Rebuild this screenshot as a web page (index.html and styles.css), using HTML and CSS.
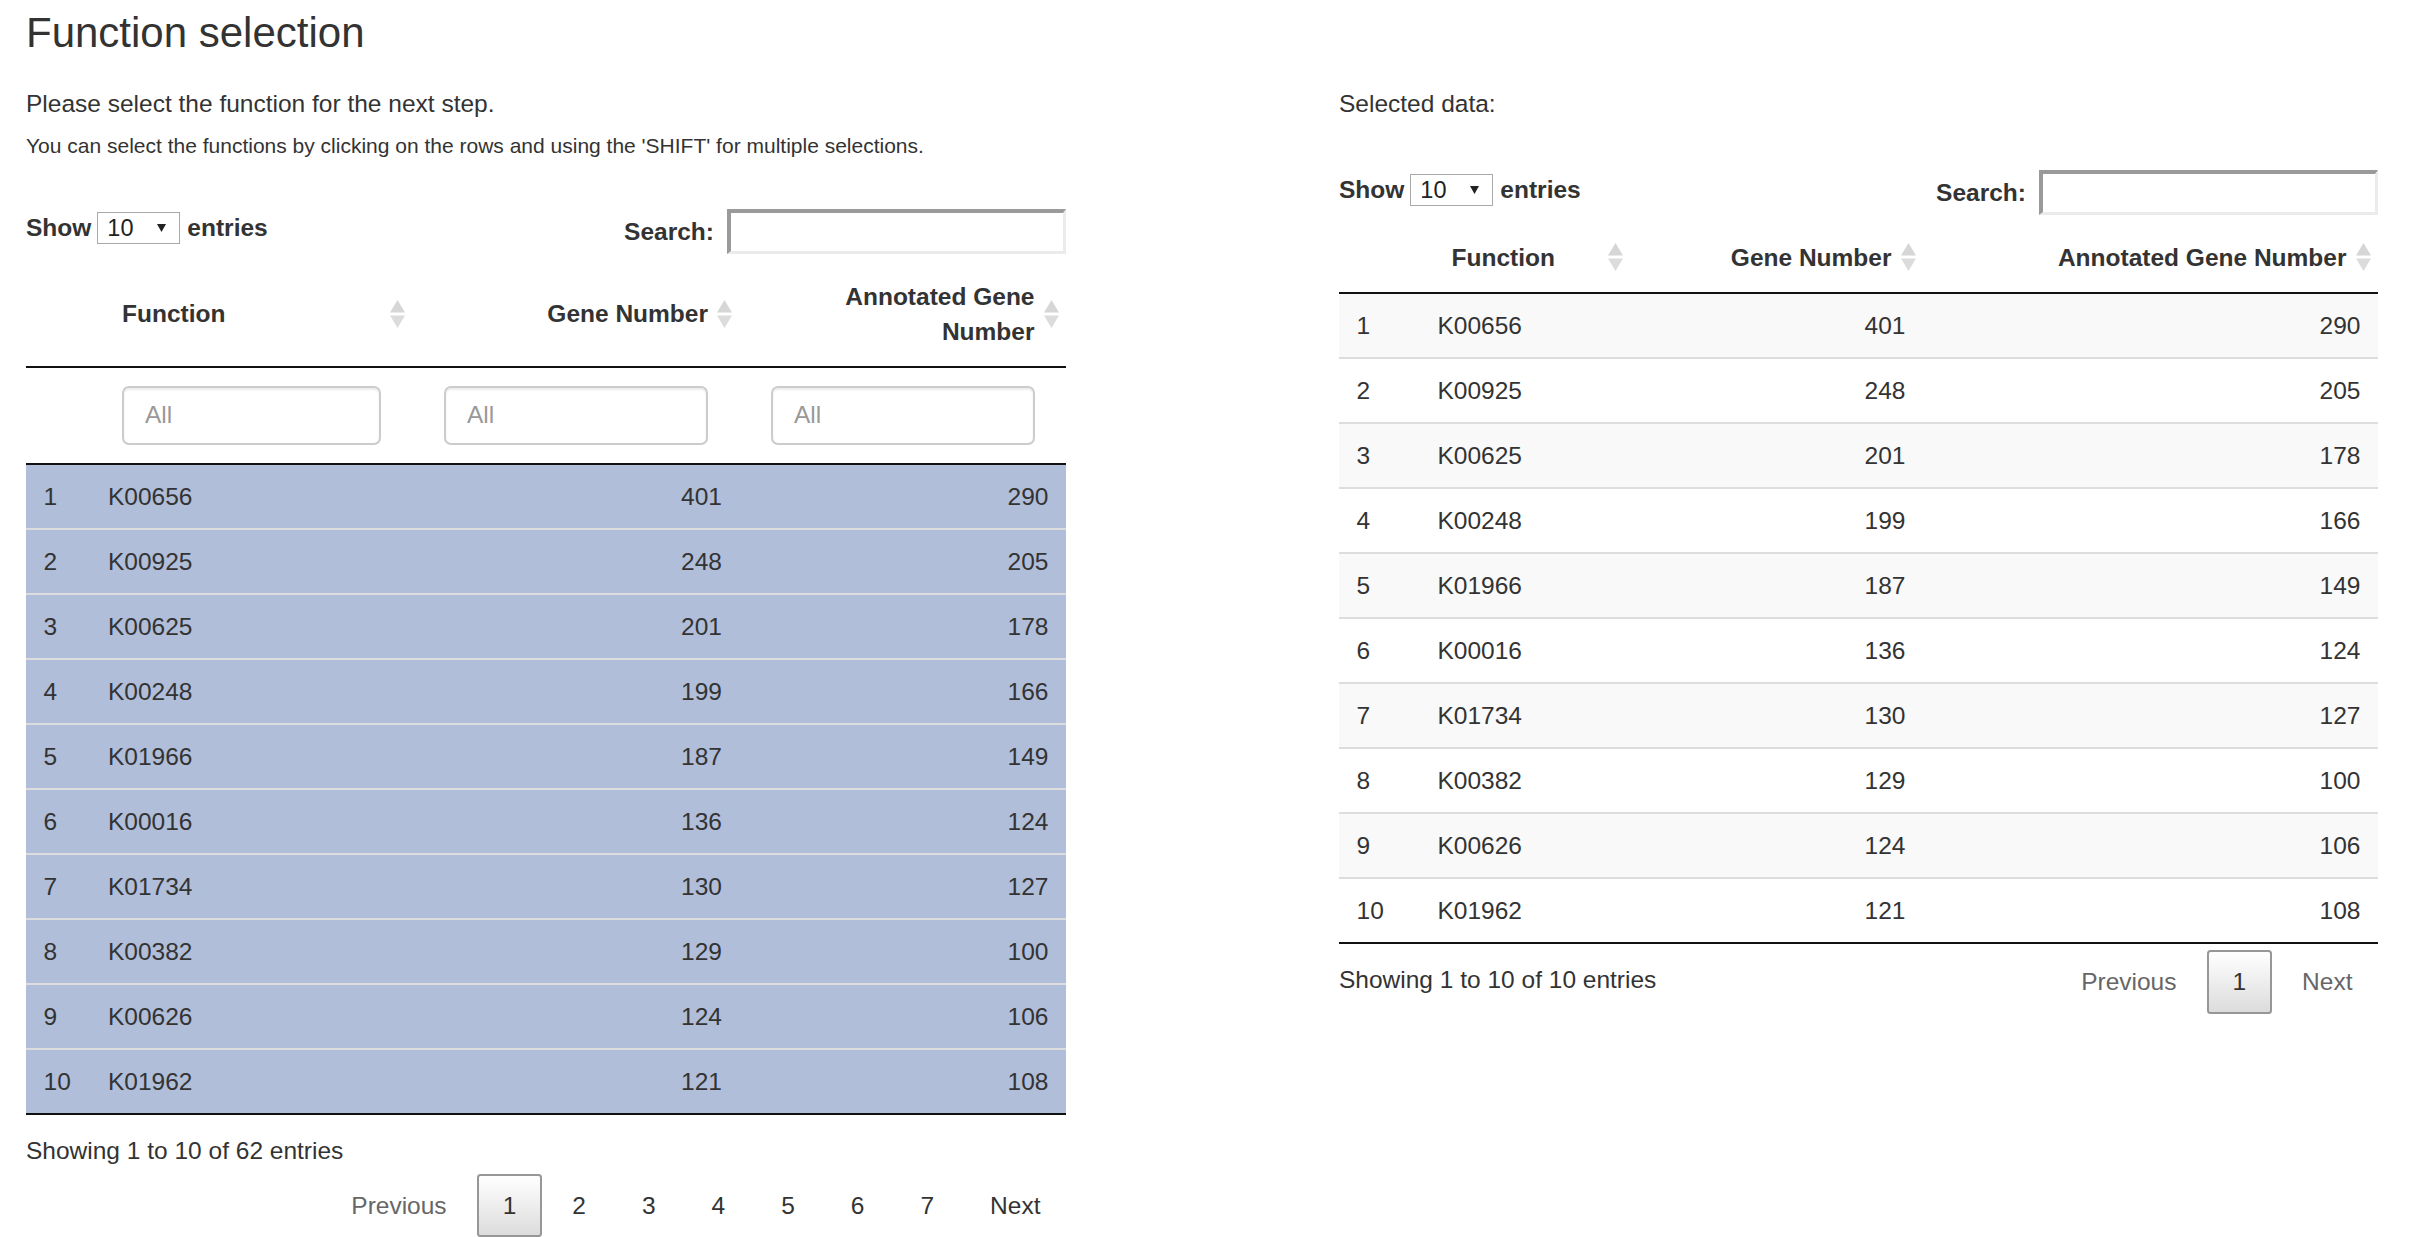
FILE: index.html
```html
<!DOCTYPE html>
<html lang="en">
<head>
<meta charset="utf-8">
<title>Function selection</title>
<link rel="stylesheet" href="styles.css">
</head>
<body>
<div class="page">
  <h3 class="title">Function selection</h3>
  <div class="cols">
    <div class="col">
      <p class="lead">Please select the function for the next step.</p>
      <p class="hint">You can select the functions by clicking on the rows and using the 'SHIFT' for multiple selections.</p>
      <div class="dt dt-left">
        <div class="controls">
          <label class="length"><span>Show</span><span class="select"><span>10</span><svg class="caret" width="9" height="8" viewBox="0 0 9 8"><polygon points="0,0 9,0 4.5,8" fill="#222"/></svg></span><span>entries</span></label>
          <label class="filter"><span>Search:</span><input type="search" class="search"></label>
        </div>
        <table class="dtable lt sel">
          <colgroup><col class="c0"><col class="c1"><col class="c2"><col class="c3"></colgroup>
          <thead>
            <tr class="head">
              <th></th>
              <th><div class="hd"><span>Function</span><svg class="sort" width="15" height="28" viewBox="0 0 15 28"><polygon points="7.5,0 15,12.5 0,12.5" fill="#d6d6d6"/><polygon points="0,15.5 15,15.5 7.5,28" fill="#dcdcdc"/></svg></div></th>
              <th><div class="hd right"><span>Gene Number</span><svg class="sort" width="15" height="28" viewBox="0 0 15 28"><polygon points="7.5,0 15,12.5 0,12.5" fill="#d6d6d6"/><polygon points="0,15.5 15,15.5 7.5,28" fill="#dcdcdc"/></svg></div></th>
              <th><div class="hd right"><span>Annotated Gene Number</span><svg class="sort" width="15" height="28" viewBox="0 0 15 28"><polygon points="7.5,0 15,12.5 0,12.5" fill="#d6d6d6"/><polygon points="0,15.5 15,15.5 7.5,28" fill="#dcdcdc"/></svg></div></th>
            </tr>
            <tr class="filters">
              <td></td>
              <td><input type="search" class="fc" placeholder="All"></td>
              <td><input type="search" class="fc" placeholder="All"></td>
              <td><input type="search" class="fc" placeholder="All"></td>
            </tr>
          </thead>
          <tbody>
            <tr><td>1</td><td>K00656</td><td class="r">401</td><td class="r">290</td></tr>
            <tr><td>2</td><td>K00925</td><td class="r">248</td><td class="r">205</td></tr>
            <tr><td>3</td><td>K00625</td><td class="r">201</td><td class="r">178</td></tr>
            <tr><td>4</td><td>K00248</td><td class="r">199</td><td class="r">166</td></tr>
            <tr><td>5</td><td>K01966</td><td class="r">187</td><td class="r">149</td></tr>
            <tr><td>6</td><td>K00016</td><td class="r">136</td><td class="r">124</td></tr>
            <tr><td>7</td><td>K01734</td><td class="r">130</td><td class="r">127</td></tr>
            <tr><td>8</td><td>K00382</td><td class="r">129</td><td class="r">100</td></tr>
            <tr><td>9</td><td>K00626</td><td class="r">124</td><td class="r">106</td></tr>
            <tr><td>10</td><td>K01962</td><td class="r">121</td><td class="r">108</td></tr>
          </tbody>
        </table>
        <div class="bottom">
          <div class="info">Showing 1 to 10 of 62 entries</div>
          <div class="paginate">
            <a class="pbtn disabled">Previous</a>
            <a class="pbtn current">1</a>
            <a class="pbtn">2</a>
            <a class="pbtn">3</a>
            <a class="pbtn">4</a>
            <a class="pbtn">5</a>
            <a class="pbtn">6</a>
            <a class="pbtn">7</a>
            <a class="pbtn">Next</a>
          </div>
        </div>
      </div>
    </div>
    <div class="col">
      <p class="lead">Selected data:</p>
      <div class="dt dt-right">
        <div class="controls">
          <label class="length"><span>Show</span><span class="select"><span>10</span><svg class="caret" width="9" height="8" viewBox="0 0 9 8"><polygon points="0,0 9,0 4.5,8" fill="#222"/></svg></span><span>entries</span></label>
          <label class="filter"><span>Search:</span><input type="search" class="search"></label>
        </div>
        <table class="dtable rt stripe">
          <colgroup><col class="c0"><col class="c1"><col class="c2"><col class="c3"></colgroup>
          <thead>
            <tr class="head">
              <th></th>
              <th><div class="hd"><span>Function</span><svg class="sort" width="15" height="28" viewBox="0 0 15 28"><polygon points="7.5,0 15,12.5 0,12.5" fill="#d6d6d6"/><polygon points="0,15.5 15,15.5 7.5,28" fill="#dcdcdc"/></svg></div></th>
              <th><div class="hd right"><span>Gene Number</span><svg class="sort" width="15" height="28" viewBox="0 0 15 28"><polygon points="7.5,0 15,12.5 0,12.5" fill="#d6d6d6"/><polygon points="0,15.5 15,15.5 7.5,28" fill="#dcdcdc"/></svg></div></th>
              <th><div class="hd right"><span>Annotated Gene Number</span><svg class="sort" width="15" height="28" viewBox="0 0 15 28"><polygon points="7.5,0 15,12.5 0,12.5" fill="#d6d6d6"/><polygon points="0,15.5 15,15.5 7.5,28" fill="#dcdcdc"/></svg></div></th>
            </tr>
          </thead>
          <tbody>
            <tr><td>1</td><td>K00656</td><td class="r">401</td><td class="r">290</td></tr>
            <tr><td>2</td><td>K00925</td><td class="r">248</td><td class="r">205</td></tr>
            <tr><td>3</td><td>K00625</td><td class="r">201</td><td class="r">178</td></tr>
            <tr><td>4</td><td>K00248</td><td class="r">199</td><td class="r">166</td></tr>
            <tr><td>5</td><td>K01966</td><td class="r">187</td><td class="r">149</td></tr>
            <tr><td>6</td><td>K00016</td><td class="r">136</td><td class="r">124</td></tr>
            <tr><td>7</td><td>K01734</td><td class="r">130</td><td class="r">127</td></tr>
            <tr><td>8</td><td>K00382</td><td class="r">129</td><td class="r">100</td></tr>
            <tr><td>9</td><td>K00626</td><td class="r">124</td><td class="r">106</td></tr>
            <tr><td>10</td><td>K01962</td><td class="r">121</td><td class="r">108</td></tr>
          </tbody>
        </table>
        <div class="bottom">
          <div class="info">Showing 1 to 10 of 10 entries</div>
          <div class="paginate">
            <a class="pbtn disabled">Previous</a>
            <a class="pbtn current">1</a>
            <a class="pbtn disabled">Next</a>
          </div>
        </div>
      </div>
    </div>
  </div>
</div>
</body>
</html>
```

FILE: styles.css
```css
* { box-sizing: border-box; }

html, body {
  margin: 0;
  padding: 0;
  background: #fff;
}

body {
  font-family: "Liberation Sans", Arial, Helvetica, sans-serif;
  font-size: 24.5px;
  line-height: 35px;
  color: #333;
}

.page {
  padding: 10px 0 0 26px;
}

.title {
  margin: 0;
  font-size: 42px;
  line-height: 46px;
  font-weight: normal;
}

.cols {
  display: grid;
  grid-template-columns: 1040px 1039px;
  column-gap: 273px;
  margin-top: 30px;
}

.lead {
  margin: 0;
}

.hint {
  margin: 10px 0 0;
  font-size: 21px;
  line-height: 30px;
}

.dt {
  margin-top: 49px;
}

.dt-left {
  margin-top: 48px;
}

.controls {
  display: flex;
  justify-content: space-between;
  align-items: flex-start;
  height: 45px;
  margin-bottom: 7px;
}

.length,
.filter {
  display: flex;
  align-items: center;
  font-weight: bold;
}

.length {
  margin-top: 1px;
}

.dt-right .length {
  margin-top: 2px;
}

.select {
  display: flex;
  align-items: center;
  justify-content: space-between;
  width: 83px;
  height: 32px;
  margin: 0 7px 0 6px;
  padding: 0 13px 0 9px;
  border: 1px solid #a9a9a9;
  font-weight: normal;
  font-size: 23.5px;
  line-height: 30px;
  color: #222;
}

.search {
  width: 339px;
  height: 45px;
  margin: 0 0 0 13px;
  padding: 0 6px;
  border-style: solid;
  border-width: 4px 3px 3px 4px;
  border-color: #9a9a9a #ebebeb #ebebeb #9a9a9a;
  font: inherit;
  font-weight: normal;
  background: #fff;
  outline: none;
}

/* tables */
.dtable {
  width: 100%;
  table-layout: fixed;
  border-collapse: separate;
  border-spacing: 0;
  border-bottom: 2px solid #111;
}

.lt .c0 { width: 64.5px; }
.lt .c1 { width: 322px; }
.lt .c2 { width: 327px; }
.lt .c3 { width: 326.5px; }

.rt .c0 { width: 81px; }
.rt .c1 { width: 210px; }
.rt .c2 { width: 293px; }
.rt .c3 { width: 455px; }

.dtable thead th {
  padding: 17.5px 7.5px 17.5px 31.5px;
  border-bottom: 2px solid #111;
  font-weight: bold;
  text-align: left;
  vertical-align: middle;
}

.hd {
  display: flex;
  align-items: center;
}

.hd span {
  flex: 1;
  min-width: 0;
}

.hd.right span {
  text-align: right;
}

.sort {
  flex: none;
  margin-left: 9px;
  display: block;
}

.filters td {
  padding: 17.5px 31.5px;
  border-bottom: 2px solid #111;
  vertical-align: top;
}

.fc {
  display: block;
  width: 100%;
  height: 59.5px;
  padding: 10px 21px;
  border: 2px solid #ccc;
  border-radius: 7px;
  box-shadow: inset 0 2px 2px rgba(0, 0, 0, 0.075);
  font: inherit;
  color: #555;
  background: #fff;
  outline: none;
}

.fc::placeholder {
  color: #999;
  opacity: 1;
}

.dtable tbody td {
  padding: 14px 17.5px;
  border-top: 2px solid #ddd;
  white-space: nowrap;
}

.dtable tbody tr:first-child td {
  border-top: none;
}

.dtable td.r {
  text-align: right;
}

.stripe tbody tr {
  background: #fff;
}

.stripe tbody tr:nth-child(odd) {
  background: #f9f9f9;
}

.sel tbody tr {
  background: #b0bed9;
}

/* bottom */
.bottom {
  display: flex;
  flex-wrap: wrap;
  justify-content: space-between;
  align-items: flex-start;
}

.info {
  padding-top: 18px;
}

.paginate {
  display: flex;
  margin-left: auto;
  padding-top: 6px;
}

.pbtn {
  display: block;
  margin-left: 5px;
  padding: 12.25px 23.5px;
  border: 2px solid transparent;
  border-radius: 3.5px;
  color: #333;
  line-height: 35px;
}

.pbtn.disabled {
  color: #666;
}

.pbtn.current {
  border-color: #979797;
  background: linear-gradient(to bottom, #fff 0%, #dcdcdc 100%);
  color: #333;
}
```
